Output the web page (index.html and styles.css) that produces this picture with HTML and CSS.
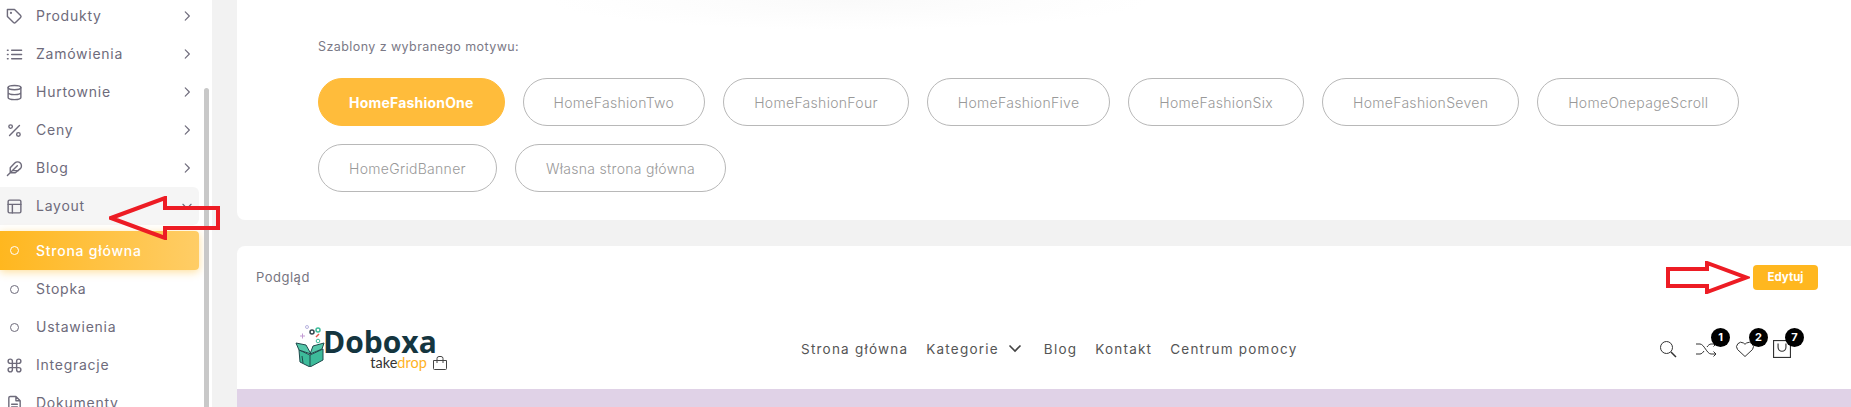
FILE: index.html
```html
<!DOCTYPE html>
<html lang="pl">
<head>
  <meta charset="UTF-8">
  <meta name="viewport" content="width=device-width, initial-scale=1">
  <title>Layout - Strona główna</title>
  <link rel="stylesheet" href="styles.css">
</head>
<body>
<div class="page">
  <aside class="sidebar">
    <div class="scrollbar"></div>
    <ul class="menu">
      <li class="menu-item">
        <svg class="menu-icon" viewBox="0 0 24 24"><path d="M20.6 13.4l-7.2 7.2a2 2 0 0 1-2.8 0L2 12V2h10l8.6 8.6a2 2 0 0 1 0 2.8z"/><circle cx="7" cy="7" r="0.6"/></svg>
        <span class="menu-label">Produkty</span>
        <svg class="chevron" viewBox="0 0 24 24"><path d="M9 5l7 7-7 7"/></svg>
      </li>
      <li class="menu-item">
        <svg class="menu-icon" viewBox="0 0 24 24"><path d="M8 6h14M8 12h14M8 18h14M2 6h1M2 12h1M2 18h1"/></svg>
        <span class="menu-label">Zamówienia</span>
        <svg class="chevron" viewBox="0 0 24 24"><path d="M9 5l7 7-7 7"/></svg>
      </li>
      <li class="menu-item">
        <svg class="menu-icon" viewBox="0 0 24 24"><ellipse cx="12" cy="5" rx="9" ry="3"/><path d="M21 12c0 1.7-4 3-9 3s-9-1.300-9-3M3 5v14c0 1.700 4 3 9 3s9-1.300 9-3V5"/></svg>
        <span class="menu-label">Hurtownie</span>
        <svg class="chevron" viewBox="0 0 24 24"><path d="M9 5l7 7-7 7"/></svg>
      </li>
      <li class="menu-item">
        <svg class="menu-icon" viewBox="0 0 24 24"><path d="M19 5L5 19"/><circle cx="6.500" cy="6.500" r="2.500"/><circle cx="17.500" cy="17.500" r="2.500"/></svg>
        <span class="menu-label">Ceny</span>
        <svg class="chevron" viewBox="0 0 24 24"><path d="M9 5l7 7-7 7"/></svg>
      </li>
      <li class="menu-item">
        <svg class="menu-icon" viewBox="0 0 24 24"><path d="M20.200 12.200a5.500 5.500 0 0 0-7.800-7.800L6 10.800V18h7.200zM16 8L2 22M17.500 15H9"/></svg>
        <span class="menu-label">Blog</span>
        <svg class="chevron" viewBox="0 0 24 24"><path d="M9 5l7 7-7 7"/></svg>
      </li>
      <li class="menu-item menu-open">
        <svg class="menu-icon" viewBox="0 0 24 24"><rect x="3" y="3" width="18" height="18" rx="2"/><path d="M3 9h18M9 21V9"/></svg>
        <span class="menu-label">Layout</span>
        <svg class="chevron" viewBox="0 0 24 24"><path d="M5 9l7 7 7-7"/></svg>
      </li>
      <li class="menu-item menu-active">
        <span class="dot"></span>
        <span class="menu-label">Strona główna</span>
      </li>
      <li class="menu-item">
        <span class="dot"></span>
        <span class="menu-label">Stopka</span>
      </li>
      <li class="menu-item">
        <span class="dot"></span>
        <span class="menu-label">Ustawienia</span>
      </li>
      <li class="menu-item">
        <svg class="menu-icon" viewBox="0 0 24 24"><path d="M18 3a3 3 0 0 0-3 3v12a3 3 0 1 0 3-3H6a3 3 0 1 0 3 3V6a3 3 0 1 0-3 3h12a3 3 0 0 0 0-6z"/></svg>
        <span class="menu-label">Integracje</span>
      </li>
      <li class="menu-item">
        <svg class="menu-icon" viewBox="0 0 24 24"><path d="M14 2H6a2 2 0 0 0-2 2v16a2 2 0 0 0 2 2h12a2 2 0 0 0 2-2V8zM14 2v6h6M16 13H8M16 17H8"/></svg>
        <span class="menu-label">Dokumenty</span>
      </li>
    </ul>
  </aside>

  <main class="main">
    <section class="card templates">
      <p class="templates-title">Szablony z wybranego motywu:</p>
      <div class="pills">
        <a class="pill pill-active">HomeFashionOne</a>
        <a class="pill">HomeFashionTwo</a>
        <a class="pill">HomeFashionFour</a>
        <a class="pill">HomeFashionFive</a>
        <a class="pill">HomeFashionSix</a>
        <a class="pill">HomeFashionSeven</a>
        <a class="pill">HomeOnepageScroll</a>
        <a class="pill">HomeGridBanner</a>
        <a class="pill">Własna strona główna</a>
      </div>
    </section>

    <section class="card preview">
      <div class="preview-head">
        <span class="preview-title">Podgląd</span>
        <button class="edit-btn">Edytuj</button>
      </div>
      <header class="shop-header">
        <div class="logo">
          <svg class="logo-box" viewBox="0 0 30 44">
            <circle cx="12" cy="4" r="1.500" fill="none" stroke="#b9b4e0"/>
            <circle cx="17" cy="9" r="2" fill="none" stroke="#33474f" stroke-width="1.500"/>
            <circle cx="23" cy="7" r="2" fill="none" stroke="#3dbb9a" stroke-width="1.500"/>
            <path d="M5 13h5M7.500 10.500v5" stroke="#c39bd3"/>
            <path d="M21 14l3-3" stroke="#e2574c" stroke-width="1.500"/>
            <circle cx="23" cy="18" r="1.800" fill="none" stroke="#3dbb9a"/>
            <path d="M4 27l11 5 13-6v11l-13 7-10-5z" fill="#3dbb9a" stroke="#1f4a4c"/>
            <path d="M1 20l10 2 5 9-12-4zM15 31l3-8 11-3-2 6z" fill="#54c7a9" stroke="#1f4a4c"/>
            <path d="M15 32v12M7 33l1 7" stroke="#1f4a4c"/>
          </svg>
          <div class="logo-text">
            <span class="logo-name">Doboxa</span>
            <span class="logo-sub">take<span class="logo-drop">drop</span>
              <svg class="logo-bag" viewBox="0 0 16 14"><path d="M1.500 4.500h13v8a1 1 0 0 1-1 1h-11a1 1 0 0 1-1-1zM5 7V2.500a2 2 0 0 1 2-2h2a2 2 0 0 1 2 2V7"/></svg>
            </span>
          </div>
        </div>
        <nav class="shop-nav">
          <a>Strona główna</a>
          <a class="has-caret">Kategorie
            <svg class="caret" viewBox="0 0 14 9"><path d="M1.500 1.500L7 7l5.500-5.500"/></svg>
          </a>
          <a>Blog</a>
          <a>Kontakt</a>
          <a>Centrum pomocy</a>
        </nav>
        <div class="shop-icons">
          <span class="shop-icon">
            <svg viewBox="0 0 18 18"><circle cx="7.500" cy="7.500" r="6"/><path d="M12 12l5 5" stroke-width="1.500"/></svg>
          </span>
          <span class="shop-icon">
            <svg viewBox="0 0 22 18"><path d="M1 4h4c4 0 7 10 11 10h5M1 14h4c1.500 0 3-1.500 4-3M12 7c1-1.500 2.500-3 4-3h5M18.500 1.500L21 4l-2.500 2.500M18.500 11.500L21 14l-2.500 2.500"/></svg>
            <span class="badge">1</span>
          </span>
          <span class="shop-icon">
            <svg viewBox="0 0 20 18"><path d="M10 16.500L2.500 9.500a4.500 4.500 0 0 1 6-6.500L10 4.300 11.500 3a4.500 4.500 0 0 1 6 6.500z"/></svg>
            <span class="badge">2</span>
          </span>
          <span class="shop-icon">
            <svg viewBox="0 0 16 16"><rect x="0.500" y="0.500" width="15" height="15"/><path d="M4.500 3v3.500a3.500 3.500 0 0 0 7 0V3"/></svg>
            <span class="badge">7</span>
          </span>
        </div>
      </header>
      <div class="hero"></div>
    </section>
  </main>

  <!-- red arrows painted over the screenshot -->
  <svg class="annot annot-left" viewBox="0 0 112 44"><path d="M2 22L56 2V12H109V32H56V42Z"/></svg>
  <svg class="annot annot-right" viewBox="0 0 84 33"><path d="M2 8H41V2L80 16.500 41 31V25H2Z"/></svg>
</div>
</body>
</html>
```

FILE: styles.css
```css
* { box-sizing: border-box; }
html, body { margin: 0; height: 100%; overflow: hidden; }
body { font-family: Inter, "Open Sans", sans-serif; background: #f2f2f2; color: #6e6b7b; }
.page { display: flex; height: 407px; position: relative; overflow: hidden; }

/* sidebar */
.sidebar { width: 212px; flex: none; background: #fff; position: relative; overflow: hidden; }
.scrollbar { position: absolute; left: 204px; top: 88px; bottom: 0; width: 5px; background: #c8c8c8; border-radius: 3px 3px 0 0; }
.menu { list-style: none; margin: -3px 0 0; padding: 0; width: 199px; }
.menu-item { display: flex; align-items: center; height: 38px; padding-left: 6px; font-size: 14px; letter-spacing: 0.75px; }
.menu-label { margin-left: 13px; padding-bottom: 1px; flex: 1; }
.menu-icon { width: 17px; height: 17px; flex: none; fill: none; stroke: #6e6b7b; stroke-width: 2; stroke-linecap: round; stroke-linejoin: round; }
.chevron { width: 14px; height: 14px; margin-right: 5px; fill: none; stroke: #6e6b7b; stroke-width: 2; stroke-linecap: round; stroke-linejoin: round; }
.menu-open { background: #f5f5f5; border-radius: 0 6px 6px 0; margin-bottom: 6px; }
.menu-active { height: 39px; margin-bottom: 0; color: #fff; font-weight: 500; border-radius: 0 4px 4px 0; background: linear-gradient(90deg, #ffb71f, #ffcd66); box-shadow: 0 2px 8px rgba(255, 183, 31, 0.45); }
.dot { width: 9px; height: 9px; margin: 0 4px; flex: none; border: 1.5px solid currentColor; border-radius: 50%; }

/* main column */
.main { flex: 1; padding-left: 25px; display: flex; flex-direction: column; gap: 26px; min-width: 0; }
.card { background: #fff; }
.templates { height: 220px; padding: 39px 81px 0; border-radius: 0 0 0 8px; background: radial-gradient(ellipse 300px 30px at 613px 0, #fafafa, #fff); }
.templates-title { margin: 0 0 24px; font-size: 12.5px; letter-spacing: 0.42px; line-height: 15px; color: #7b7986; }
.pills { display: flex; flex-wrap: wrap; gap: 18px; width: 1470px; }
.pill { height: 48px; display: flex; align-items: center; padding: 0 30px; border: 1px solid #b8b8b8; border-radius: 24px; font-size: 14px; letter-spacing: 0.3px; color: #999; font-weight: 300; }
.pill-active { background: #ffbc3b; border-color: #ffbc3b; color: #fff; font-weight: 700; letter-spacing: 0.2px; }

/* preview card */
.preview { flex: 1; border-radius: 8px 0 0 0; display: flex; flex-direction: column; min-height: 0; }
.preview-head { display: flex; justify-content: space-between; align-items: center; height: 62px; padding: 0 33px 0 19px; }
.preview-title { font-size: 13px; letter-spacing: 0.5px; color: #77757f; }
.edit-btn { width: 65px; height: 25px; padding: 0; border: none; border-radius: 4px; background: #ffb71f; color: #fff; font: 700 11.5px Inter, sans-serif; }
.shop-header { display: flex; align-items: center; height: 81px; padding: 0 60px 0 58px; }

/* logo */
.logo { display: flex; width: 155px; }
.logo-box { width: 30px; height: 44px; flex: none; margin-top: -4px; }
.logo-text { display: flex; flex-direction: column; line-height: 1; margin: 1px 0 0 -2px; }
.logo-name { font: 700 30px/28px "Open Sans", sans-serif; color: #14353f; }
.logo-sub { display: flex; align-items: center; justify-content: flex-end; font: 400 14.5px/12px Lato, sans-serif; color: #333; margin-right: -11px; white-space: nowrap; }
.logo-drop { color: #ffb21e; }
.logo-bag { width: 16px; height: 14px; margin-left: 5px; fill: none; stroke: #444; }

/* shop nav */
.shop-nav { display: flex; align-items: center; gap: 18px; margin-left: 351px; font-size: 13.5px; letter-spacing: 1.22px; color: #555; }
.has-caret { display: flex; align-items: center; gap: 9px; margin-right: 4px; }
.caret { width: 14px; height: 9px; fill: none; stroke: #444; stroke-width: 1.6; }

.shop-icons { display: flex; align-items: center; gap: 18px; margin-left: auto; }
.shop-icon { position: relative; display: flex; }
.shop-icon svg { height: 18px; width: auto; fill: none; stroke: #333; stroke-width: 1; }
.badge { position: absolute; right: -13px; top: -12px; width: 19px; height: 19px; border-radius: 50%; background: #000; color: #fff; font-size: 11px; font-weight: 700; line-height: 19px; text-align: center; }

.hero { flex: 1; background: #e0d2e7; }

/* red arrows */
.annot { position: absolute; fill: none; stroke: #ed1c24; stroke-width: 4; }
.annot-left { left: 109px; top: 196px; width: 112px; height: 44px; }
.annot-right { left: 1666px; top: 261px; width: 84px; height: 33px; }
```
